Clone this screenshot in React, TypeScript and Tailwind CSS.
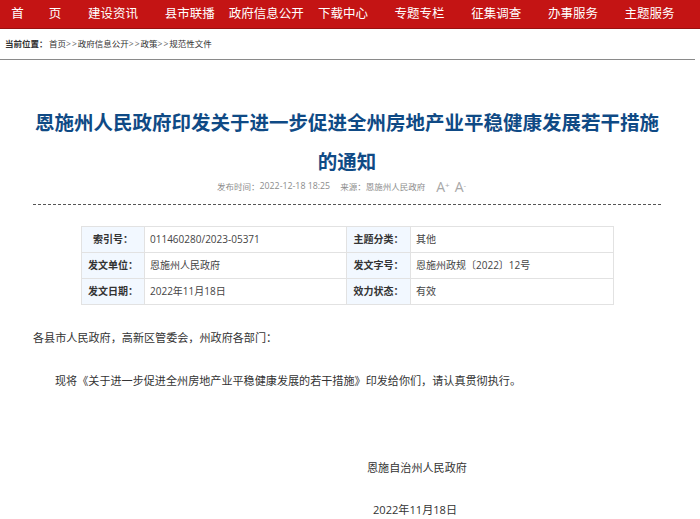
const NAV = ['首\u3000\u3000页', '建设资讯', '县市联播', '政府信息公开', '下载中心', '专题专栏', '征集调查', '办事服务', '主题服务']

const YAHEI = "font-['Open_Sans','Noto_Sans_CJK_SC',sans-serif]"

// 全角标点
const COLON = '\uFF1A'
const COMMA = '\uFF0C'

const ROWS = [
  ['索引号', '011460280/2023-05371', '主题分类', '其他'],
  ['发文单位', '恩施州人民政府', '发文字号', '恩施州政规〔2022〕12号'],
  ['发文日期', '2022年11月18日', '效力状态', '有效'],
]

const CRUMBS = ['首页', '政府信息公开', '政策', '规范性文件']

export default function App() {
  return (
    <div className={`w-[700px] h-[519px] overflow-hidden bg-white ${YAHEI}`}>
      {/* 顶部导航 */}
      <div className="h-[29px] bg-[#c41414] border-b border-[#9a1010] flex overflow-hidden">
        <div className="flex -ml-[2px]">
          {NAV.map((item) => (
            <div key={item} className="w-[76.67px] shrink-0 text-center text-white text-[12.5px] leading-[28px] whitespace-pre">
              {item}
            </div>
          ))}
        </div>
      </div>

      {/* 当前位置 */}
      <div className="h-[31px] mr-[5px] border-b border-[#8a8a8a] flex items-center pl-[5px] text-[8.5px] text-[#333]">
        <span className="font-bold w-[44px]">当前位置{COLON}</span>
        {CRUMBS.map((c, i) => (
          <span key={c} className="flex">
            {i > 0 && <span className="tracking-[1px] text-[#666]">&gt;&gt;</span>}
            {c}
          </span>
        ))}
      </div>

      <div className="ml-[33px] w-[628px]">
        <h1 className="mt-[43px] text-center text-[#0f4a85] font-bold text-[19.5px] leading-[39px]">
          恩施州人民政府印发关于进一步促进全州房地产业平稳健康发展若干措施的通知
        </h1>

        {/* 发布信息 */}
        <div className="h-[12px] pl-[184px] flex items-center text-[8.5px] text-[#8c8c8c] whitespace-nowrap">
          <span>发布时间{COLON}</span>
          <span className="text-[8.8px]">2022-12-18 18:25</span>
          <span className="ml-[10px]">来源{COLON}恩施州人民政府</span>
          <span className="ml-[11px] text-[14px] text-[#a8a8a8] leading-none">A<sup className="text-[8px]">+</sup></span>
          <span className="ml-[5px] text-[14px] text-[#a8a8a8] leading-none">A<sup className="text-[8px]">-</sup></span>
        </div>
        <div className="mt-[11px] border-t border-dashed border-[#555]" />

        {/* 信息表 */}
        <table className="mt-[21px] ml-[48px] w-[533px] border-collapse table-fixed text-[10px] text-[#444]">
          <colgroup>
            <col className="w-[63px]" />
            <col className="w-[202px]" />
            <col className="w-[64px]" />
            <col />
          </colgroup>
          <tbody>
            {ROWS.map((r) => (
              <tr key={r[0]} className="h-[26px]">
                <td className="border border-[#e2e2e2] bg-[#f2f8ff] text-center font-bold text-[#333]">{r[0]}{COLON}</td>
                <td className="border border-[#e2e2e2] pl-[5px]">{r[1]}</td>
                <td className="border border-[#e2e2e2] bg-[#f2f8ff] text-center font-bold text-[#333]">{r[2]}{COLON}</td>
                <td className="border border-[#e2e2e2] pl-[5px]">{r[3]}</td>
              </tr>
            ))}
          </tbody>
        </table>

        {/* 正文 */}
        <div className="text-[11.1px] leading-[18px] text-[#333]">
          <p className="mt-[24px]">各县市人民政府{COMMA}高新区管委会{COMMA}州政府各部门{COLON}</p>
          <p className="mt-[25px] pl-[22px]">
            现将《关于进一步促进全州房地产业平稳健康发展的若干措施》印发给你们{COMMA}请认真贯彻执行。
          </p>
          <p className="mt-[69px] ml-[334px]">恩施自治州人民政府</p>
          <p className="mt-[24px] ml-[340px]">2022年11月18日</p>
        </div>
      </div>
    </div>
  )
}
